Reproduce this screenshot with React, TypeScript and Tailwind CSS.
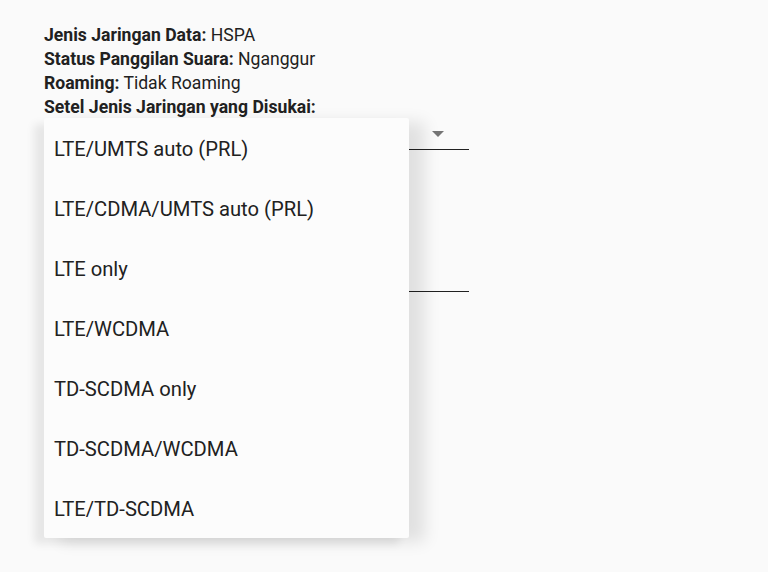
import React from 'react';

const options = [
  'LTE/UMTS auto (PRL)',
  'LTE/CDMA/UMTS auto (PRL)',
  'LTE only',
  'LTE/WCDMA',
  'TD-SCDMA only',
  'TD-SCDMA/WCDMA',
  'LTE/TD-SCDMA',
];

const info = [
  { label: 'Jenis Jaringan Data:', value: 'HSPA' },
  { label: 'Status Panggilan Suara:', value: 'Nganggur' },
  { label: 'Roaming:', value: 'Tidak Roaming' },
];

export default function App() {
  return (
    <div
      className="relative w-[768px] h-[572px] overflow-hidden bg-[#fafafa] text-[#212121]"
      style={{ fontFamily: 'Roboto, "Noto Sans", sans-serif' }}
    >
      <div className="pl-[44px] pt-[23px] w-[469px]">
        {/* Status info */}
        <div className="text-[17.6px] leading-[24px]">
          {info.map((row) => (
            <div key={row.label}>
              <span className="font-bold">{row.label}</span> {row.value}
            </div>
          ))}
          <div className="font-bold">Setel Jenis Jaringan yang Disukai:</div>
        </div>

        {/* Spinner (closed) */}
        <div className="h-[30px] flex items-center justify-end border-b border-[#212121] mt-[1px]">
          <div className="w-0 h-0 border-l-[6px] border-r-[6px] border-t-[6px] border-l-transparent border-r-transparent border-t-[#757575] mr-[25px] mb-[2px]" />
        </div>

        {/* Second spinner */}
        <div className="h-[142px] border-b border-[#212121]" />
      </div>

      {/* Open dropdown menu */}
      <div className="absolute left-[44px] top-[118px] w-[365px] bg-[#fcfcfc] rounded-[2px] shadow-[-10px_6px_8px_rgba(0,0,0,0.08),16px_4px_16px_rgba(0,0,0,0.1)]">
        {options.map((opt) => (
          <div key={opt} className="h-[60px] flex items-center pl-[10px] pt-[3px] text-[20.2px] text-[#212121]">
            {opt}
          </div>
        ))}
      </div>
    </div>
  );
}
